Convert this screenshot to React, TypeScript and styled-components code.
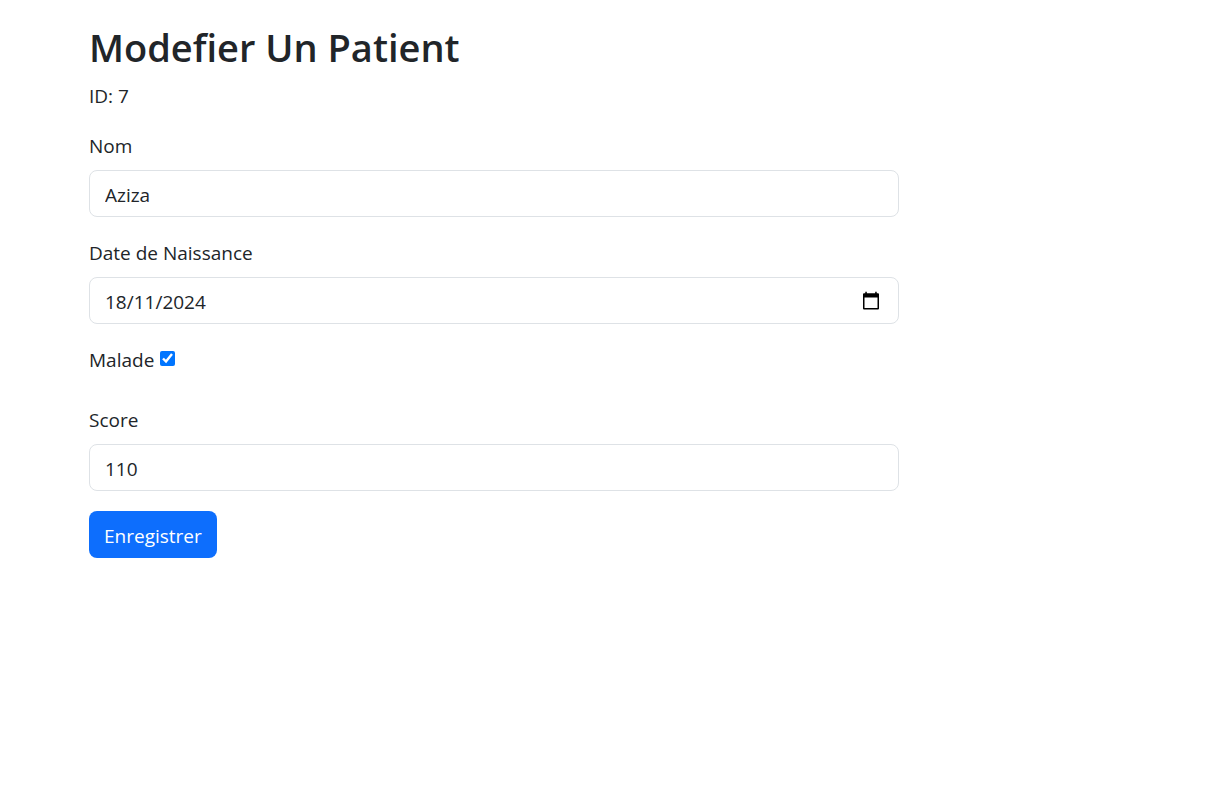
import React, { useState } from 'react';
import styled, { createGlobalStyle, css } from 'styled-components';

const GlobalStyle = createGlobalStyle`
  *, *::before, *::after { box-sizing: border-box; }
  body {
    margin: 0;
    background: #fff;
    color: #212529;
    font-family: "Segoe UI", "Open Sans", "Noto Sans", sans-serif;
    font-size: 19px;
    line-height: 30px;
  }
`;

const Page = styled.main`
  padding: 23px 322px 24px 89px;

  @media (max-width: 800px) {
    padding: 23px 24px;
  }
`;

const Title = styled.h1`
  margin: 0 0 10px;
  font-size: 38px;
  font-weight: 600;
  line-height: 48px;
`;

const Identifier = styled.p`
  margin: 0 0 20px;
`;

const Form = styled.form`
  display: flex;
  flex-direction: column;
  align-items: stretch;
  gap: 20px;
`;

const Fields = styled.div`
  display: flex;
  flex-direction: column;
  gap: 21px;
`;

const Field = styled.div`
  display: flex;
  flex-direction: column;
  gap: 9px;
`;

const CheckField = styled.div`
  display: flex;
  align-items: center;
  gap: 6px;
  padding-bottom: 9px;
`;

const Label = styled.label``;

const boxStyle = css`
  width: 100%;
  height: 47px;
  border: 1px solid #dee2e6;
  border-radius: 8px;
  background: #fff;

  &:focus-within {
    border-color: #86b7fe;
  }
`;

const textStyle = css`
  padding: 2px 15px 0;
  color: #212529;
  font: inherit;
  outline: none;
`;

const TextInput = styled.input`
  ${boxStyle}
  ${textStyle}
`;

const DateBox = styled.div`
  ${boxStyle}
  display: flex;
  align-items: center;
  padding-right: 15px;
`;

const DateInput = styled.input`
  ${textStyle}
  flex: 1;
  min-width: 0;
  height: 100%;
  border: 0;
  background: transparent;
`;

const PickerButton = styled.button`
  display: flex;
  padding: 2px;
  border: 0;
  background: transparent;
  color: #000;
  cursor: pointer;
`;

const Checkbox = styled.input`
  width: 15px;
  height: 15px;
  margin: 0 0 3px;
  accent-color: #0075ff;
`;

const SubmitButton = styled.button`
  align-self: flex-start;
  height: 47px;
  padding: 2px 15px 0;
  border: 0;
  border-radius: 8px;
  background: #0d6efd;
  color: #fff;
  font: inherit;
  cursor: pointer;
`;

function CalendarIcon() {
  return (
    <svg width="20" height="20" viewBox="0 0 20 20" fill="currentColor" aria-hidden="true">
      <path
        fillRule="evenodd"
        d="M4.3 .8h1.5v1.4h8.4V.8h1.5v1.4H17q1 0 1 1V17.4q0 1-1 1H3q-1 0-1-1V3.2q0-1 1-1h1.3zM3.5 6.4v10.6h13V6.4z"
      />
    </svg>
  );
}

export default function App() {
  const [name, setName] = useState('Aziza');
  const [birthDate, setBirthDate] = useState('18/11/2024');
  const [sick, setSick] = useState(true);
  const [score, setScore] = useState('110');

  return (
    <>
      <GlobalStyle />
      <Page>
        <Title>Modefier Un Patient</Title>
        <Identifier>ID: 7</Identifier>
        <Form onSubmit={(e) => e.preventDefault()}>
          <Fields>
            <Field>
              <Label htmlFor="nom">Nom</Label>
              <TextInput id="nom" type="text" value={name} onChange={(e) => setName(e.target.value)} />
            </Field>
            <Field>
              <Label htmlFor="naissance">Date de Naissance</Label>
              <DateBox>
                <DateInput
                  id="naissance"
                  type="text"
                  inputMode="numeric"
                  value={birthDate}
                  onChange={(e) => setBirthDate(e.target.value)}
                />
                <PickerButton type="button" aria-label="Choisir une date">
                  <CalendarIcon />
                </PickerButton>
              </DateBox>
            </Field>
            <CheckField>
              <Label htmlFor="malade">Malade</Label>
              <Checkbox id="malade" type="checkbox" checked={sick} onChange={(e) => setSick(e.target.checked)} />
            </CheckField>
            <Field>
              <Label htmlFor="score">Score</Label>
              <TextInput id="score" type="text" value={score} onChange={(e) => setScore(e.target.value)} />
            </Field>
          </Fields>
          <SubmitButton type="submit">Enregistrer</SubmitButton>
        </Form>
      </Page>
    </>
  );
}
